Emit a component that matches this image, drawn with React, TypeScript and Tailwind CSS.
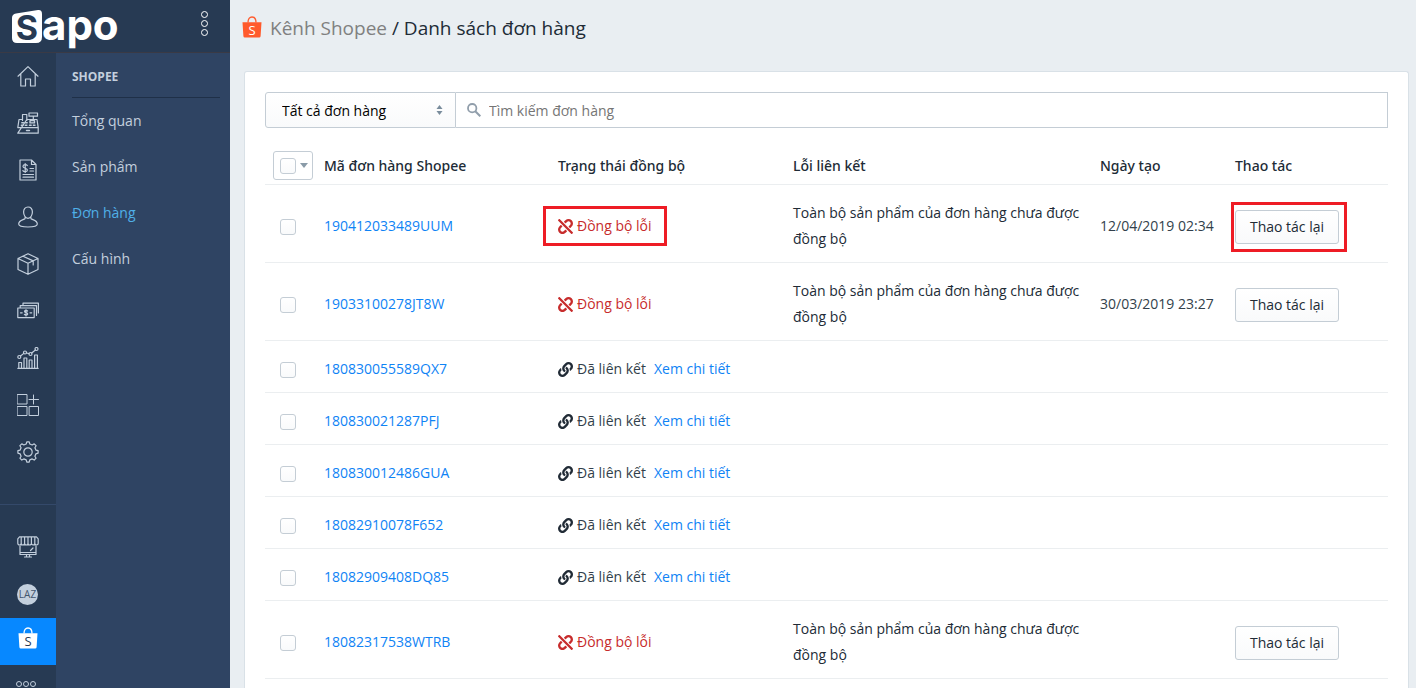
import React from "react";
import { FaLink, FaUnlink } from "react-icons/fa";

type Order = {
    code: string;
    failed?: boolean;
    date?: string;
    marked?: boolean;
};

const orders: Order[] = [
    { code: "190412033489UUM", failed: true, date: "12/04/2019 02:34", marked: true },
    { code: "19033100278JT8W", failed: true, date: "30/03/2019 23:27" },
    { code: "180830055589QX7" },
    { code: "180830021287PFJ" },
    { code: "180830012486GUA" },
    { code: "18082910078F652" },
    { code: "18082909408DQ85" },
    { code: "18082317538WTRB", failed: true },
];

const menu = [
    { label: "Tổng quan" },
    { label: "Sản phẩm" },
    { label: "Đơn hàng", active: true },
    { label: "Cấu hình" },
];

function Icon({ children }: { children: React.ReactNode }) {
    return (
        <svg
            viewBox="0 0 22 22"
            className="h-[22px] w-[22px]"
            fill="none"
            stroke="currentColor"
            strokeWidth="1.2"
            strokeLinejoin="round"
            strokeLinecap="round"
        >
            {children}
        </svg>
    );
}

function Bag({ letter }: { letter: string }) {
    return (
        <svg viewBox="0 0 20 22" className="h-[22px] w-5">
            <path d="M6 6.500C6 3 7.600 1 10 1s4 2 4 5.500" fill="none" stroke="currentColor" strokeWidth="1.300" />
            <path d="M.5 6.200h19l-.9 14a1.500 1.500 0 0 1-1.500 1.300H2.900a1.500 1.500 0 0 1-1.500-1.300z" fill="currentColor" />
            <text x="10" y="18.500" textAnchor="middle" fontSize="13" fontFamily="Open Sans, sans-serif" fill={letter}>
                S
            </text>
        </svg>
    );
}

const railIcons = [
    {
        name: "Trang chủ",
        icon: <path d="M1 11.200 11 1.600l10 9.600M3.800 9v12h4.700v-7h5v7h4.700V9" />,
    },
    {
        name: "Bán hàng",
        icon: (
            <>
                <path d="M.8 15.600 2 7.500h3.500M9.800 7.500H20l1.200 8.100v5.600H.8zM.8 15.600h20.400M5.500 8.500v-6h4.300v6M12 1h8.500v3.200H12zM16.300 4.200v3.300" />
                <path d="M4.800 10.800h1.700M8.500 10.800h1.700M4.300 13.200H6M8.200 13.200h1.700M12.500 13.200h1.700M16.300 13.200H18M9.500 18.500h3M13 8.600h4.500v2.300H13z" strokeWidth="1.400" />
            </>
        ),
    },
    {
        name: "Hóa đơn",
        icon: (
            <>
                <path d="M3 1h11.500L19 5.500V21H3zM14.500 1v4.500H19" />
                <path d="M10.300 6.500C9.500 5.300 6 5.300 6 7.400c0 2.200 4.400 1.500 4.400 3.700 0 2-3.400 2.200-4.600.6M8.200 4.500v9M13 9.500h3.500M13 12h3.500M6 15.500h10.500M6 18.200h10.500" />
            </>
        ),
    },
    {
        name: "Khách hàng",
        icon: (
            <path d="M11 1c-2.700 0-4.400 2-4.400 5S8.300 12.300 11 12.300 15.400 9 15.400 6 13.700 1 11 1zM8 11.500v1.300C6 14 1.700 14.200 1.700 18c0 4 18.600 4 18.600 0 0-3.800-4.300-4-6.300-5.200v-1.300" />
        ),
    },
    {
        name: "Sản phẩm",
        icon: <path d="M11 .8 21 5.500v11L11 21.300 1 16.500v-11zM1 5.500l10 4.800 10-4.800M11 10.300v11M6 3.200l10.200 4.700v4" />,
    },
    {
        name: "Sổ quỹ",
        icon: (
            <>
                <path d="M.8 8h16.400v9.600H.8zM3.200 8V5.600h16.300v9.900M6 5.500V3.200h15.400V13" />
                <path d="M10.500 11c-.8-.9-3-.7-3 .5 0 1.400 3.200.9 3.200 2.400 0 1.300-2.500 1.400-3.300.4M9 9.700v6.200M3.500 12.800h1.700M13 12.800h1.700" />
            </>
        ),
    },
    {
        name: "Báo cáo",
        icon: (
            <>
                <path d="M.8 21.300h20.400M1.800 21v-5.500h2.700V21M7 21V11h2.800v10M12.200 21v-8h2.800v8M17.600 21V8h2.800v13" />
                <circle cx="2.300" cy="10" r="1.500" />
                <circle cx="8" cy="5.500" r="1.500" />
                <circle cx="13.500" cy="7" r="1.500" />
                <circle cx="19.500" cy="2" r="1.500" />
                <path d="m3.500 9 3.300-2.600M9.500 6l2.500.6M14.700 6l3.700-3" />
            </>
        ),
    },
    {
        name: "Ứng dụng",
        icon: <path d="M.5.5h9.500v9.500H.5zM.5 12.500h9.500V21.500H.5zM12.500 12.500h9v9h-9zM12 5.500h9.500M16.500 1v9" strokeWidth="1" />,
    },
    {
        name: "Cấu hình",
        icon: (
            <>
                <path d="M9.200 3 9.800.8h2.400l.6 2.200 2.400 1 2-1.200 1.900 1.900-1.200 2 1 2.400 2.200.6v2.500l-2.200.6-1 2.400 1.200 2-1.900 1.900-2-1.200-2.400 1-.6 2.300H9.800l-.6-2.300-2.400-1-2 1.200-1.900-1.900 1.200-2-1-2.400-2.200-.6V9.700l2.200-.6 1-2.400-1.200-2 1.900-1.900 2 1.200z" />
                <circle cx="11" cy="11" r="4.200" />
            </>
        ),
    },
];

function Logo() {
    return (
        <svg viewBox="0 0 112 52" className="h-[52px] w-28 overflow-visible" role="img" aria-label="Sapo">
            <path d="M5 13.500 27 10q4-.5 4 4v23q0 6-6 6H6q-5 0-5-5V18q0-4 4-4.500z" fill="#fff" />
            <text x="16" y="40" textAnchor="middle" fontSize="34" fontWeight="700" fontFamily="Inter, sans-serif" fill="#273a53">
                S
            </text>
            <text x="31" y="40" fontSize="42" fontWeight="700" fontFamily="Inter, sans-serif" fill="#fff">
                apo
            </text>
        </svg>
    );
}

function Sidebar() {
    return (
        <aside className="flex w-[230px] shrink-0 flex-col bg-[#273a53] text-[#c3cfdd]">
            <div className="flex h-[53px] shrink-0 items-start justify-between border-b border-[#3a3a45] pr-[22px] pl-[11px]">
                <Logo />
                <button aria-label="Mở rộng" className="flex flex-col items-center gap-[2px] pt-[11px] text-white">
                    <span className="h-[7px] w-[7px] rounded-full border border-current"></span>
                    <span className="h-[7px] w-[7px] rounded-full border border-current"></span>
                    <span className="h-[7px] w-[7px] rounded-full border border-current"></span>
                </button>
            </div>
            <div className="flex min-h-0 flex-1">
                <nav className="flex w-14 shrink-0 flex-col overflow-hidden">
                    {railIcons.map((item) => (
                        <a key={item.name} href="#" aria-label={item.name} className="flex h-[47px] shrink-0 items-center justify-center pr-px pb-px">
                            <Icon>{item.icon}</Icon>
                        </a>
                    ))}
                    <div className="mt-7 shrink-0 border-t border-[#34496a] pt-[19px]">
                        <a href="#" aria-label="Website" className="flex h-[47px] items-center justify-center pr-px pb-px">
                            <Icon>
                                <path d="M2.500.8h17l1.700 2v4.500a1.600 1.600 0 0 1-3.400 0 1.600 1.600 0 0 1-3.400 0 1.600 1.600 0 0 1-3.400 0 1.600 1.600 0 0 1-3.400 0 1.600 1.600 0 0 1-3.400 0 1.600 1.600 0 0 1-3.400 0V2.800zM4.200 1v6.500M7.600 1v6.500M11 1v6.500M14.400 1v6.500M17.800 1v6.500" />
                                <path d="M3 10v8.500h16V10M3 16.500h16M9.500 18.700v2M12.500 18.700v2M7.500 21h7M13.500 14.500l2.500-2.500" />
                            </Icon>
                        </a>
                        <a href="#" aria-label="Lazada" className="flex h-[47px] items-center justify-center pr-px pb-px">
                            <span className="flex h-[21px] w-[21px] items-center justify-center rounded-full bg-[#c3cfdd] text-[10px] leading-none text-[#43566f]">
                                LAZ
                            </span>
                        </a>
                        <a href="#" aria-label="Shopee" className="flex h-[47px] items-center justify-center bg-[#0788ff] pb-2 text-white">
                            <Bag letter="#273a53" />
                        </a>
                        <button aria-label="Thêm" className="flex h-[38px] w-full items-center justify-center gap-[3px] pr-1">
                            <span className="h-1 w-1 rounded-full outline outline-current"></span>
                            <span className="h-1 w-1 rounded-full outline outline-current"></span>
                            <span className="h-1 w-1 rounded-full outline outline-current"></span>
                        </button>
                    </div>
                </nav>
                <nav className="flex-1 bg-[#2f4463] pr-[10px] pl-4 text-[14px]">
                    <h2 className="border-b border-[#1f3048] pt-[14px] pb-[10px] text-[12px] leading-5 font-bold">SHOPEE</h2>
                    <ul>
                        {menu.map((item) => (
                            <li key={item.label}>
                                <a
                                    href="#"
                                    className={item.active ? "flex h-[46px] items-center pb-px text-[#4fb0e8]" : "flex h-[46px] items-center pb-px"}
                                >
                                    {item.label}
                                </a>
                            </li>
                        ))}
                    </ul>
                </nav>
            </div>
        </aside>
    );
}

const checkbox =
    "block h-4 w-4 appearance-none rounded-[3px] border border-[#c4cdd5] bg-gradient-to-b from-white to-[#f9fafb] checked:bg-[#0788ff]";

function OrderRow({ order }: { order: Order }) {
    return (
        <tr className="border-b border-[#ebeef0]">
            <td className="pt-4 pb-[9px] pl-[15px]">
                <input type="checkbox" aria-label={order.code} className={checkbox} />
            </td>
            <td className="px-2 pt-[15px] pb-[10px]">
                <a href="#" className="text-[#0f83f5]">{order.code}</a>
            </td>
            <td className="px-2 pt-[15px] pb-[10px]">
                {order.failed ? (
                    <span className="relative flex w-max items-center gap-1 text-[#c72c2c]">
                        <FaUnlink className="h-[15px] w-[15px] shrink-0" />
                        Đồng bộ lỗi
                        {order.marked && <span className="absolute -inset-x-[15px] -inset-y-[7px] border-3 border-[#ee1c25]"></span>}
                    </span>
                ) : (
                    <span className="flex items-center gap-1">
                        <FaLink className="h-[15px] w-[15px] shrink-0 text-[#212b36]" />
                        Đã liên kết
                        <a href="#" className="ml-1 text-[#0f83f5]">Xem chi tiết</a>
                    </span>
                )}
            </td>
            <td className="px-2 pt-[15px] pb-[10px] text-[#212b36]">{order.failed && "Toàn bộ sản phẩm của đơn hàng chưa được đồng bộ"}</td>
            <td className="px-2 pt-[15px] pb-[10px] whitespace-nowrap">{order.date}</td>
            <td className="px-2 pt-4 pb-[9px]">
                {order.failed && (
                    <div className="relative flex w-[104px]">
                        <button className="h-[34px] flex-1 rounded-[3px] border border-[#c4cdd5] bg-gradient-to-b from-white to-[#f9fafb] text-[#212b36]">
                            Thao tác lại
                        </button>
                        {order.marked && <span className="pointer-events-none absolute -inset-y-[8px] -right-2 -left-1 border-3 border-[#ee1c25]"></span>}
                    </div>
                )}
            </td>
        </tr>
    );
}

export default function App() {
    return (
        <div className="flex h-screen overflow-hidden bg-[#e9eef2] font-['Open_Sans','Noto_Sans',sans-serif] text-[14px] text-[#323f4b]">
            <Sidebar />
            <main className="flex min-w-0 flex-1 flex-col pr-[7px] pl-3">
                <h1 className="flex h-[71px] shrink-0 items-start gap-2 pt-[14px] text-[19px] leading-7 text-[#212b36]">
                    <span className="flex pt-[2px] text-[#ff5a2c]">
                        <Bag letter="#fff" />
                    </span>
                    <span>
                        <a href="#" className="text-[#808080]">Kênh Shopee</a> / Danh sách đơn hàng
                    </span>
                </h1>
                <section className="ml-[2px] flex-1 rounded-t-[3px] border border-b-0 border-[#d9e1e7] bg-white px-5 pt-5">
                    <div className="flex h-9">
                        <div className="relative w-[191px] shrink-0">
                            <select
                                aria-label="Lọc đơn hàng"
                                className="h-full w-full appearance-none rounded-l-[3px] border border-[#c4cdd5] bg-gradient-to-b from-white to-[#f9fafb] pl-4 text-black"
                            >
                                <option>Tất cả đơn hàng</option>
                            </select>
                            <svg viewBox="0 0 6 10" className="pointer-events-none absolute top-[13px] right-[13px] h-[10px] w-[7px] fill-[#798c9c]">
                                <path d="M3 0l3 4H0zM3 10l3-4H0z" />
                            </svg>
                        </div>
                        <label className="flex flex-1 items-center gap-2 border border-l-0 border-[#c4cdd5] pl-[11px]">
                            <svg viewBox="0 0 14 14" className="h-[14px] w-[14px]" fill="none" stroke="#919eab" strokeWidth="1.800">
                                <circle cx="5.200" cy="5.200" r="4.200" />
                                <path d="m8.300 8.300 5 5" strokeWidth="2" />
                            </svg>
                            <input
                                type="text"
                                aria-label="Tìm kiếm đơn hàng"
                                placeholder="Tìm kiếm đơn hàng"
                                className="h-full flex-1 outline-none placeholder:text-[#757575]"
                            />
                        </label>
                    </div>
                    <table className="mt-4 w-full table-fixed text-left leading-[26px]">
                        <thead className="font-['Noto_Sans',sans-serif]">
                            <tr className="border-b border-[#ebeef0] text-[#212b36]">
                                <th className="w-[51px] pt-[7px] pb-1 pl-2">
                                    <div className="flex h-[29px] w-10 items-center gap-1 rounded-[3px] border border-[#c4cdd5] pl-[6px]">
                                        <input type="checkbox" aria-label="Chọn tất cả" className={checkbox} />
                                        <svg viewBox="0 0 8 5" className="h-[5px] w-2 fill-[#8a9ba8]">
                                            <path d="M0 0h8L4 5z" />
                                        </svg>
                                    </div>
                                </th>
                                <th className="w-[234px] px-2 pt-[7px] pb-1 font-medium">Mã đơn hàng Shopee</th>
                                <th className="w-[235px] px-2 pt-[7px] pb-1 font-medium">Trạng thái đồng bộ</th>
                                <th className="px-2 pt-[7px] pb-1 font-medium">Lỗi liên kết</th>
                                <th className="w-[135px] px-2 pt-[7px] pb-1 font-medium">Ngày tạo</th>
                                <th className="w-[161px] px-2 pt-[7px] pb-1 font-medium">Thao tác</th>
                            </tr>
                        </thead>
                        <tbody>
                            {orders.map((order) => (
                                <OrderRow key={order.code} order={order} />
                            ))}
                        </tbody>
                    </table>
                </section>
            </main>
        </div>
    );
}
